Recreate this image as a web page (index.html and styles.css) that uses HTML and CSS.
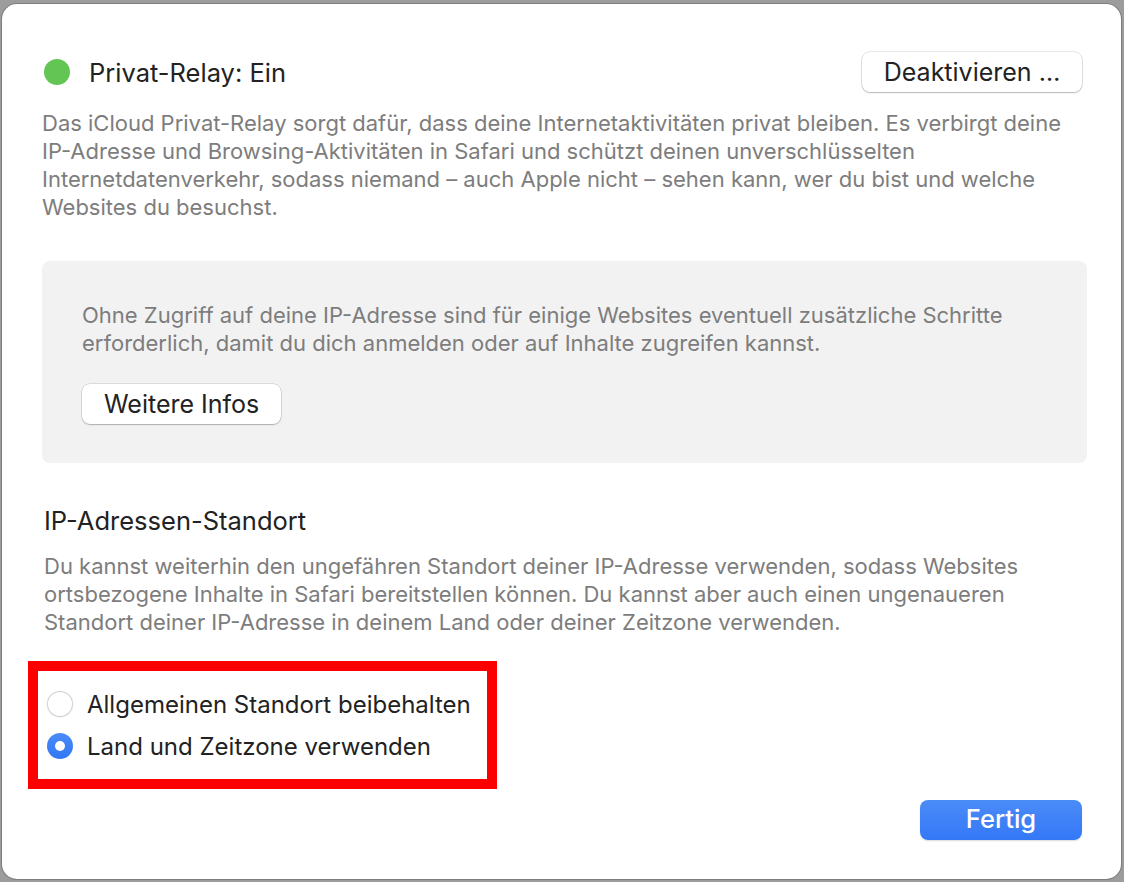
FILE: index.html
```html
<!DOCTYPE html>
<html lang="de">

<head>
    <meta charset="UTF-8">
    <meta name="viewport" content="width=device-width, initial-scale=1.0">
    <title>Privat-Relay</title>
    <link rel="stylesheet" href="styles.css">
</head>

<body>

    <div class="dialog">

        <div class="header">
            <div class="status">
                <span class="dot"></span>
                <span class="title">Privat-Relay: Ein</span>
            </div>
            <button class="btn wide">Deaktivieren …</button>
        </div>

        <p class="desc">Das iCloud Privat-Relay sorgt dafür, dass deine Internetaktivitäten privat bleiben. Es verbirgt deine<br>
            IP-Adresse und Browsing-Aktivitäten in Safari und schützt deinen unverschlüsselten<br>
            Internetdatenverkehr, sodass niemand – auch Apple nicht – sehen kann, wer du bist und welche<br>
            Websites du besuchst.</p>

        <div class="infobox">
            <p class="desc">Ohne Zugriff auf deine IP-Adresse sind für einige Websites eventuell zusätzliche Schritte<br>
                erforderlich, damit du dich anmelden oder auf Inhalte zugreifen kannst.</p>
            <button class="btn">Weitere Infos</button>
        </div>

        <h2 class="section">IP-Adressen-Standort</h2>
        <p class="desc indent">Du kannst weiterhin den ungefähren Standort deiner IP-Adresse verwenden, sodass Websites<br>
            ortsbezogene Inhalte in Safari bereitstellen können. Du kannst aber auch einen ungenaueren<br>
            Standort deiner IP-Adresse in deinem Land oder deiner Zeitzone verwenden.</p>

        <div class="highlight">
            <label class="option">
                <span class="radio"></span>
                <span>Allgemeinen Standort beibehalten</span>
            </label>
            <label class="option">
                <span class="radio checked"></span>
                <span>Land und Zeitzone verwenden</span>
            </label>
        </div>

        <div class="footer">
            <button class="btn primary">Fertig</button>
        </div>

    </div>

</body>

</html>
```

FILE: styles.css
```css
* {
    box-sizing: border-box;
}

body {
    margin: 0;
    padding: 4px 3px 3px 2px;
    background-color: #9c9c9c;
    font-family: 'Inter', 'Liberation Sans', sans-serif;
}

.dialog {
    width: 1119px;
    height: 875px;
    background-color: #fff;
    border-radius: 15px;
    box-shadow: 0 0 0 1px #7d7d7d;
    padding: 48px 34px 0 40px;
}

.header {
    display: flex;
    justify-content: space-between;
    align-items: center;
    height: 40px;
    margin-right: 5px;
}

.status {
    display: flex;
    align-items: center;
    gap: 19px;
    padding-left: 2px;
}

.dot {
    width: 26px;
    height: 26px;
    border-radius: 50%;
    background-color: #62c554;
}

.title {
    font-size: 25.5px;
    color: #222;
}

.btn {
    font-family: inherit;
    font-size: 25px;
    color: #222;
    background-color: #fff;
    border: none;
    border-radius: 8px;
    height: 40px;
    padding: 0 22px;
    box-shadow: 0 0 0 0.5px rgba(0, 0, 0, 0.18), 0 1px 1.5px rgba(0, 0, 0, 0.22);
}

.btn.wide {
    width: 220px;
    padding: 0;
}

.desc {
    margin: 17px 0 0 0;
    font-size: 22px;
    line-height: 28px;
    color: #7d7d7d;
    white-space: nowrap;
}

.infobox {
    margin-top: 40px;
    background-color: #f2f2f2;
    border-radius: 8px;
    padding: 40px 40px 39px 40px;
}

.infobox .desc {
    margin: 0;
}

.infobox .btn {
    margin-top: 27px;
}

.section {
    margin: 44px 0 0 2px;
    font-size: 25.5px;
    font-weight: 400;
    line-height: 28px;
    color: #222;
}

.indent {
    margin-left: 2px;
}

.highlight {
    margin: 25px 0 0 -14px;
    width: 469px;
    height: 128px;
    border: 10px solid #fc0000;
    padding: 12px 0 0 9px;
}

.option {
    display: flex;
    align-items: center;
    gap: 14px;
    height: 42px;
    font-size: 24px;
    color: #222;
}

.radio {
    width: 26px;
    height: 26px;
    border-radius: 50%;
    background-color: #fff;
    box-shadow: inset 0 0 0 1px #cfcfcf, 0 0.5px 1px rgba(0, 0, 0, 0.1);
    display: flex;
    align-items: center;
    justify-content: center;
}

.radio.checked {
    background: linear-gradient(#4a8cf7, #3276f5);
    box-shadow: none;
}

.radio.checked::after {
    content: "";
    width: 10px;
    height: 10px;
    border-radius: 50%;
    background-color: #fff;
}

.footer {
    display: flex;
    justify-content: flex-end;
    margin: 11px 5px 0 0;
}

.btn.primary {
    width: 162px;
    color: #fff;
    font-size: 25.5px;
    font-weight: 500;
    padding-bottom: 3px;
    background: linear-gradient(#4a8cf7, #3478f6);
    box-shadow: 0 1px 1.5px rgba(0, 0, 0, 0.15);
}
```
